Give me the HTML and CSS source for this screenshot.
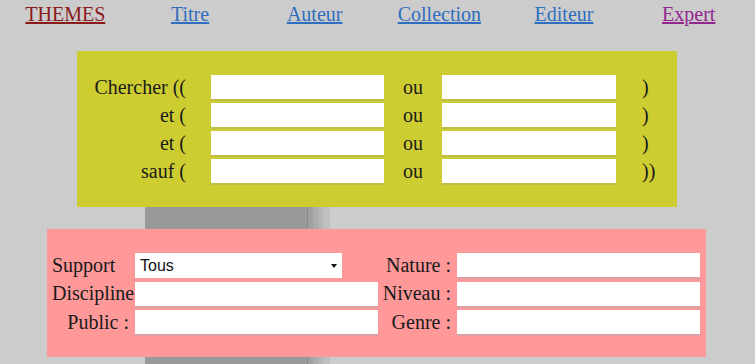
FILE: index.html
```html
<!DOCTYPE html>
<html lang="fr">
<head>
    <meta charset="UTF-8">
    <title>Recherche expert</title>
    <link rel="stylesheet" href="styles.css">
</head>
<body>
    <nav class="menu">
        <a class="menu-link themes" href="#">THEMES</a>
        <a class="menu-link" href="#">Titre</a>
        <a class="menu-link" href="#">Auteur</a>
        <a class="menu-link" href="#">Collection</a>
        <a class="menu-link" href="#">Editeur</a>
        <a class="menu-link expert" href="#">Expert</a>
    </nav>

    <div class="page">
        <form class="search-box">
            <span class="label">Chercher ((</span>
            <input class="field" type="text">
            <span class="ou">ou</span>
            <input class="field" type="text">
            <span class="paren">)</span>

            <span class="label">et (</span>
            <input class="field" type="text">
            <span class="ou">ou</span>
            <input class="field" type="text">
            <span class="paren">)</span>

            <span class="label">et (</span>
            <input class="field" type="text">
            <span class="ou">ou</span>
            <input class="field" type="text">
            <span class="paren">)</span>

            <span class="label">sauf (</span>
            <input class="field" type="text">
            <span class="ou">ou</span>
            <input class="field" type="text">
            <span class="paren">))</span>
        </form>

        <form class="filter-box">
            <span class="flabel left">Support</span>
            <span class="select-wrap">
                <select class="select">
                    <option>Tous</option>
                </select>
            </span>
            <span class="flabel right">Nature :</span>
            <input class="ffield" type="text">

            <span class="flabel">Discipline</span>
            <input class="ffield" type="text">
            <span class="flabel right">Niveau :</span>
            <input class="ffield" type="text">

            <span class="flabel right pad">Public :</span>
            <input class="ffield" type="text">
            <span class="flabel right">Genre :</span>
            <input class="ffield" type="text">
        </form>
    </div>
</body>
</html>
```

FILE: styles.css
```css
body {
    margin: 0;
    background: #cccccc;
    font-family: "Liberation Serif", "Times New Roman", serif;
    font-size: 20px;
    color: #1a1a1a;
}
.menu {
    display: flex;
    padding: 3px 4px 0 3px;
    line-height: 23px;
}
.menu-link {
    flex: 1;
    text-align: center;
    color: #2f6dbf;
}
.menu-link.themes {
    color: #8b1a1a;
}
.menu-link.expert {
    color: #93278f;
}
.page {
    margin-top: 25px;
    padding-bottom: 20px;
    background: linear-gradient(to right,
        transparent 145px, #999999 145px, #999999 307px,
        #8a8a8a 307px, #8a8a8a 308px, #a0a0a0 308px, #a0a0a0 313px,
        #ababab 313px, #ababab 318px, #b5b5b5 318px, #b5b5b5 323px,
        #c0c0c0 323px, #c0c0c0 330px, transparent 330px);
}
.search-box {
    width: 600px;
    margin: 0 0 0 77px;
    padding: 24px 0;
    background: #cdcd32;
    display: grid;
    grid-template-columns: 134px 173px 58px 174px 1fr;
    grid-auto-rows: 24px;
    row-gap: 4px;
    align-items: center;
}
.label {
    text-align: right;
    padding-right: 25px;
}
.ou {
    text-align: center;
}
.paren {
    padding-left: 26px;
}
.field,
.ffield {
    box-sizing: border-box;
    height: 24px;
    margin: 0;
    border: none;
    background: #ffffff;
    font: inherit;
}
.field {
    box-shadow: 0 2px 0 #bdbd48;
}
.filter-box {
    width: 659px;
    box-sizing: border-box;
    margin: 22px 0 0 47px;
    padding: 24px 6px 23px 5px;
    background: #ff9999;
    display: grid;
    grid-template-columns: 83px 243px 79px 243px;
    grid-auto-rows: 24px;
    row-gap: 4.5px;
    align-items: center;
}
.flabel {
    white-space: nowrap;
}
.flabel.right {
    text-align: right;
    padding-right: 6px;
}
.flabel.pad {
    padding-right: 6px;
}
.ffield {
    box-shadow: 0 2px 0 #dba0a6;
}
.select-wrap {
    position: relative;
    width: 207px;
    height: 25px;
}
.select {
    appearance: none;
    width: 100%;
    height: 25px;
    margin: 0;
    border: none;
    padding: 0 0 0 5px;
    background: #ffffff;
    font-family: "Liberation Sans", Arial, sans-serif;
    font-size: 16px;
    color: #111111;
}
.select-wrap::after {
    content: "";
    position: absolute;
    left: 196px;
    top: 11px;
    border-left: 3.5px solid transparent;
    border-right: 3.5px solid transparent;
    border-top: 4px solid #111111;
    pointer-events: none;
}
```
